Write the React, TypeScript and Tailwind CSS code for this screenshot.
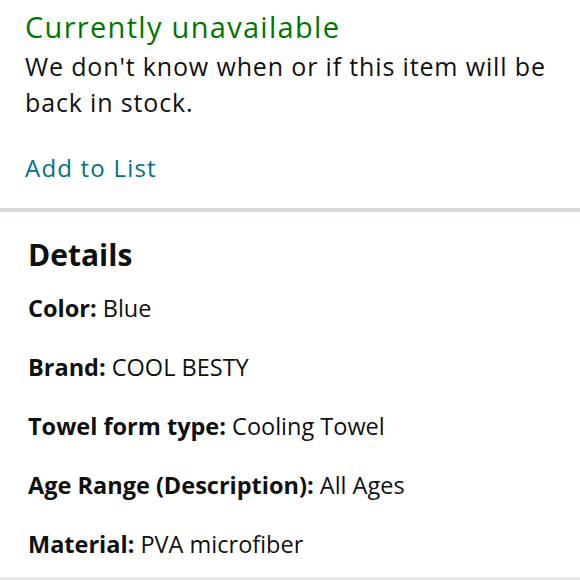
const details = [
  { label: "Color:", value: "Blue" },
  { label: "Brand:", value: "COOL BESTY" },
  { label: "Towel form type:", value: "Cooling Towel" },
  { label: "Age Range (Description):", value: "All Ages" },
  { label: "Material:", value: "PVA microfiber" },
];

export default function App() {
  return (
    <div className="h-[580px] w-[580px] overflow-hidden bg-white font-['Open_Sans',sans-serif] text-[#0f1111]">
      <div className="px-[25px] pt-[9px]">
        <div className="text-[29px] leading-[36px] tracking-[1.3px] text-[#007600]">Currently unavailable</div>
        <p className="mt-[3px] pr-[5px] text-[25px] leading-[36px] tracking-[0.85px]">
          We don't know when or if this item will be back in stock.
        </p>
        <div className="mt-[30px] text-[24px] leading-[36px] tracking-[1.2px] text-[#007185]">Add to List</div>
      </div>
      <div className="mt-[22px] h-[4px] bg-[#d5d9d9]" />
      <div className="px-[28px]">
        <h2 className="mt-[25px] text-[30px] font-bold leading-[36px]">Details</h2>
        <div className="mt-[17px] flex flex-col gap-[23px]">
          {details.map((d) => (
            <div key={d.label} className="text-[23.5px] leading-[36px]">
              <span className="font-bold">{d.label}</span> {d.value}
            </div>
          ))}
        </div>
      </div>
      <div className="mt-[15px] h-[3px] bg-[#e7e9e9]" />
    </div>
  );
}
